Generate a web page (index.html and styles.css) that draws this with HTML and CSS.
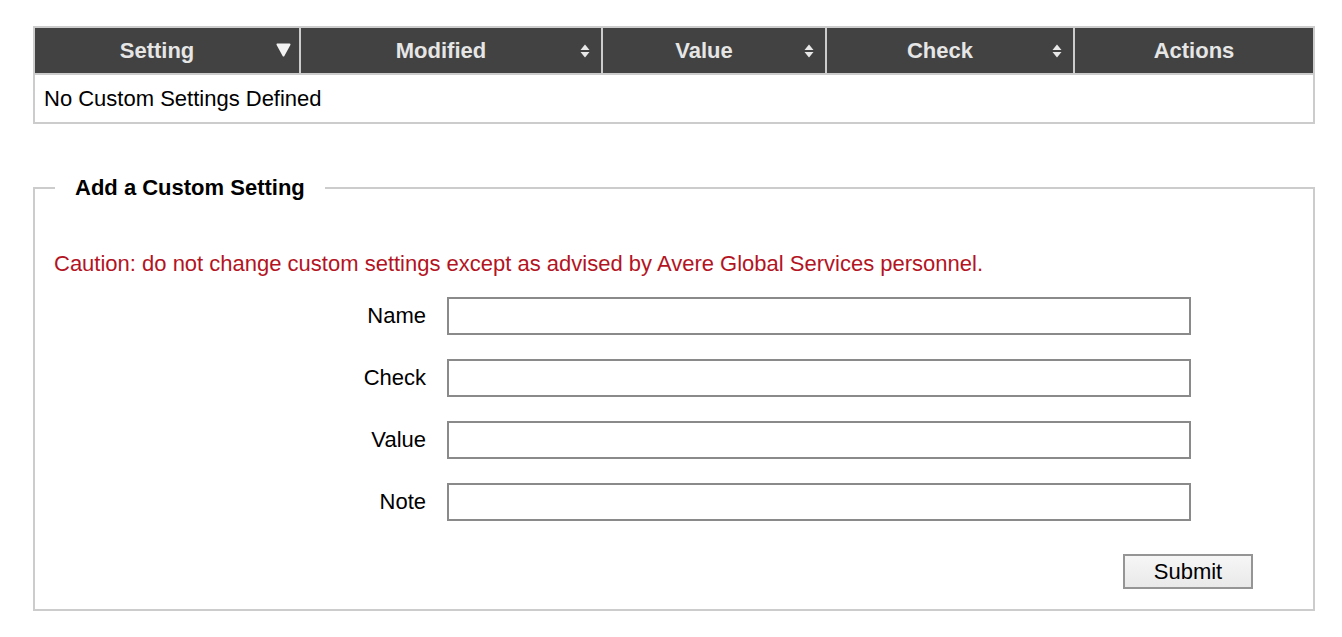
FILE: index.html
```html
<!DOCTYPE html>
<html>
<head>
<meta charset="utf-8">
<link rel="stylesheet" href="styles.css">
</head>
<body>
<div class="page">
  <table class="grid">
    <thead>
      <tr>
        <th class="c1 sortable">Setting
          <svg class="sort-desc" width="15" height="14" viewBox="0 0 15 14"><path d="M1.5 1.5 H13.5 L7.5 12.5 Z" fill="#f2f2f2" stroke="#f2f2f2" stroke-width="2" stroke-linejoin="round"/></svg>
        </th>
        <th class="c2 sortable">Modified
          <svg class="sort-both" width="10" height="14" viewBox="0 0 10 14"><path d="M5 0.5 L9.5 6 H0.5 Z M0.5 8 H9.5 L5 13.5 Z" fill="#e8e8e8"/></svg>
        </th>
        <th class="c3 sortable">Value
          <svg class="sort-both" width="10" height="14" viewBox="0 0 10 14"><path d="M5 0.5 L9.5 6 H0.5 Z M0.5 8 H9.5 L5 13.5 Z" fill="#e8e8e8"/></svg>
        </th>
        <th class="c4 sortable">Check
          <svg class="sort-both" width="10" height="14" viewBox="0 0 10 14"><path d="M5 0.5 L9.5 6 H0.5 Z M0.5 8 H9.5 L5 13.5 Z" fill="#e8e8e8"/></svg>
        </th>
        <th class="c5">Actions</th>
      </tr>
    </thead>
    <tbody>
      <tr>
        <td colspan="5" class="empty">No Custom Settings Defined</td>
      </tr>
    </tbody>
  </table>

  <fieldset class="add-box">
    <legend class="add-legend">Add a Custom Setting</legend>
    <p class="caution">Caution: do not change custom settings except as advised by Avere Global Services personnel.</p>
    <div class="form-grid">
      <label class="form-label" for="f-name">Name</label>
      <input class="form-input" id="f-name" type="text">
      <label class="form-label" for="f-check">Check</label>
      <input class="form-input" id="f-check" type="text">
      <label class="form-label" for="f-value">Value</label>
      <input class="form-input" id="f-value" type="text">
      <label class="form-label" for="f-note">Note</label>
      <input class="form-input" id="f-note" type="text">
    </div>
    <div class="actions">
      <button class="submit-btn" type="button">Submit</button>
    </div>
  </fieldset>
</div>
</body>
</html>
```

FILE: styles.css
```css
html, body {
  margin: 0;
  padding: 0;
  background: #ffffff;
}

body {
  font-family: "Liberation Sans", Arial, Helvetica, sans-serif;
  font-size: 22px;
  color: #000;
}

.page {
  width: 1282px;
  margin: 26px 0 0 33px;
}

.grid {
  width: 1282px;
  table-layout: fixed;
  border-collapse: separate;
  border-spacing: 0;
  border: 2px solid #cccccc;
}

.grid th {
  box-sizing: border-box;
  position: relative;
  height: 47px;
  padding: 0;
  background: #424242;
  color: #e6e6e6;
  font-weight: bold;
  font-size: 22px;
  text-align: center;
  vertical-align: middle;
  border-left: 2px solid #cccccc;
  border-bottom: 2px solid #cccccc;
}

.grid th.c1 { width: 264px; border-left: none; }
.grid th.c2 { width: 302px; }
.grid th.c3 { width: 224px; }
.grid th.c4 { width: 248px; }
.grid th.c5 { width: 240px; }

.grid th.sortable {
  padding-right: 20px;
}

.sort-desc {
  position: absolute;
  right: 8px;
  top: 15px;
}

.sort-both {
  position: absolute;
  right: 11px;
  top: 16px;
}

.grid td.empty {
  height: 47px;
  padding: 0 0 0 9px;
  vertical-align: middle;
  font-size: 22px;
}

.add-box {
  margin: 51px 0 0 0;
  padding: 0 0 20px 0;
  border: 2px solid #cccccc;
  min-width: 0;
}

.add-legend {
  margin-left: 20px;
  padding: 0 20px;
  font-weight: bold;
  font-size: 22px;
  line-height: 26px;
}

.caution {
  margin: 50px 0 0 19px;
  color: #b3141f;
  font-size: 22px;
  line-height: 26px;
}

.form-grid {
  display: grid;
  grid-template-columns: 391px 744px;
  column-gap: 21px;
  row-gap: 24px;
  margin-top: 20px;
  align-items: center;
}

.form-label {
  text-align: right;
  font-size: 22px;
}

.form-input {
  box-sizing: border-box;
  height: 38px;
  width: 744px;
  margin: 0;
  border: 2px solid #8a8a8a;
  background: #fff;
  font-family: inherit;
  font-size: 20px;
  padding: 0 6px;
}

.actions {
  display: flex;
  justify-content: flex-end;
  margin: 33px 60px 0 0;
}

.submit-btn {
  box-sizing: border-box;
  width: 130px;
  height: 35px;
  margin: 0;
  padding: 0;
  border: 2px solid #959595;
  background: linear-gradient(#f6f6f6, #e9e9e9);
  font-family: "Liberation Sans", Arial, Helvetica, sans-serif;
  font-size: 22px;
  color: #000;
}
```
